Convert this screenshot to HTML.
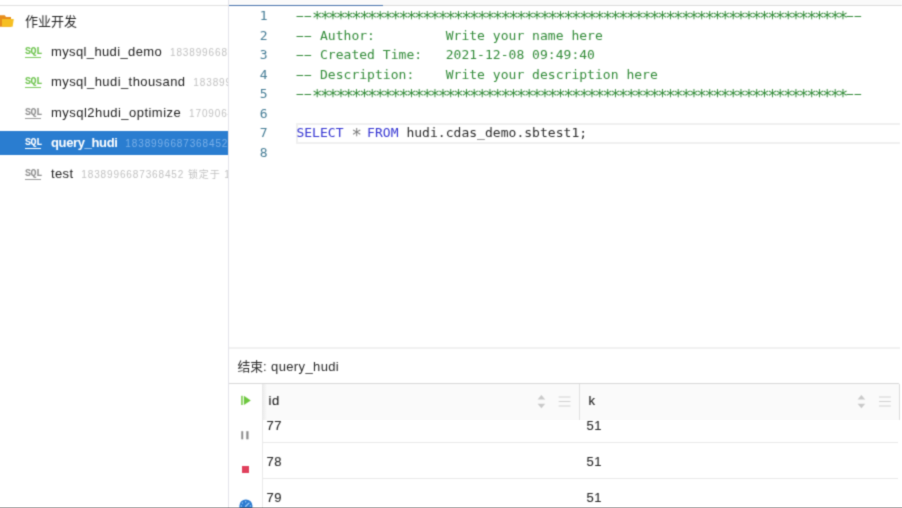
<!DOCTYPE html>
<html lang="zh">
<head>
<meta charset="utf-8">
<title>作业开发</title>
<style>
html,body{margin:0;padding:0;}
body{width:902px;height:508px;overflow:hidden;background:#fff;position:relative;font-family:"Liberation Sans","Noto Sans CJK SC",sans-serif;color:#222;}
.abs{position:absolute;}
#wrap{left:-10px;top:-10px;width:922px;height:528px;filter:url(#soft);}
#wrap>*{margin-left:10px;margin-top:10px;}
#side{left:0;top:0;width:228px;height:508px;}
.item{position:absolute;left:0;width:228px;height:24px;white-space:nowrap;overflow:hidden;}
.item .nm{position:absolute;left:51px;top:0;line-height:24px;font-size:13px;letter-spacing:0.37px;color:#222;}
.item .id em{font-style:normal;}
.item .id{font-size:10px;color:#c2c2c2;margin-left:7.9px;font-weight:normal;letter-spacing:0.87px;position:relative;top:-0.4px;}
.selbg{position:absolute;left:-6px;top:130.5px;width:234px;height:24.5px;background:#2a7dd0;}
.item.sel .nm{color:#fff;font-weight:bold;letter-spacing:-0.36px;}
.item.sel .id{color:#7ab0e8;}
.sql{position:absolute;left:25px;top:5px;width:16px;height:16px;}
.sql span{position:absolute;left:0;top:2px;width:16px;text-align:center;font-family:"Liberation Mono",monospace;font-weight:bold;font-size:10px;line-height:10px;letter-spacing:-0.4px;}
.sql i{position:absolute;left:0;top:12px;width:16px;height:1px;}
.g span{color:#6fc450}.g i{background:#7ccb5e}
.y span{color:#909090}.y i{background:#9a9a9a}
.w span{color:#fff}.w i{background:#fff}
#ed{left:229px;top:0;width:673px;height:348px;}
.ln{position:absolute;left:0;width:38.5px;text-align:right;font-family:"DejaVu Sans Mono","Liberation Mono",monospace;font-size:13px;line-height:19.5px;color:#467d96;}
.cl{position:absolute;left:67.4px;white-space:pre;font-family:"DejaVu Sans Mono","Liberation Mono",monospace;font-size:13px;letter-spacing:0.03px;line-height:19.5px;color:#348c3a;}
.cl b{font-weight:normal;position:relative;top:4.2px;font-size:17.3px;line-height:0;letter-spacing:-2.558px;}
.cl u{text-decoration:none;display:inline-block;transform:scaleX(2);}
.kw{color:#3434d2}.tx{color:#2c2c2c}.op{color:#7a7a7a}
.cell{position:absolute;font-size:13px;line-height:20px;color:#262626;letter-spacing:0.45px;-webkit-text-stroke:0.1px #262626;}
.hd{position:absolute;font-size:13px;line-height:20px;color:#1e1e1e;letter-spacing:0.5px;-webkit-text-stroke:0.15px #1e1e1e;}
.rs{position:absolute;left:263px;width:635px;height:1px;background:#e8e8e8;}
</style>
</head>
<body>
<svg width="0" height="0" style="position:absolute"><defs><filter id="soft" x="0" y="0" width="100%" height="100%" color-interpolation-filters="sRGB"><feConvolveMatrix order="3" kernelMatrix="0.0277 0.111 0.0277 0.111 0.4452 0.111 0.0277 0.111 0.0277" divisor="1" edgeMode="duplicate" preserveAlpha="false"/></filter></defs></svg>
<div id="wrap" class="abs">
<div id="side" class="abs">
  <div class="abs" style="left:-6px;top:5px;width:234px;height:1px;background:#e0e0e0"></div>
  <svg class="abs" style="left:0;top:14px;overflow:visible" width="16" height="14" viewBox="0 0 16 14"><path d="M-4 1.2H4.8L6 3H11V12.7H-4z" fill="#e78d1c"/><path d="M2 5H13.8L12.6 12.7H2z" fill="#f6bf22"/></svg>
  <div class="abs" style="left:25px;top:12px;font-size:13px;line-height:20px;color:#262626">作业开发</div>
  <div class="selbg"></div>
  <div class="item" style="top:40px"><div class="sql g"><span>SQL</span><i></i></div><div class="nm">mysql_hudi_demo<span class="id">1838996687368452</span></div></div>
  <div class="item" style="top:70px"><div class="sql g"><span>SQL</span><i></i></div><div class="nm"><span style="letter-spacing:0.42px">mysql_hudi_thousand</span><span class="id">1838996687368452</span></div></div>
  <div class="item" style="top:101px"><div class="sql y"><span>SQL</span><i></i></div><div class="nm"><span style="letter-spacing:0.46px">mysql2hudi_optimize</span><span class="id">1709064687368452</span></div></div>
  <div class="item sel" style="top:131px"><div class="sql w"><span>SQL</span><i></i></div><div class="nm">query_hudi<span class="id">1838996687368452 <em>锁定于</em></span></div></div>
  <div class="item" style="top:162px"><div class="sql y"><span>SQL</span><i></i></div><div class="nm">test<span class="id">1838996687368452 <em>锁定于</em> 1838996687368452</span></div></div>
</div>
<div class="abs" style="left:228px;top:-6px;width:1px;height:520px;background:#e3e3ea"></div>
<div id="ed" class="abs">
  <div class="abs" style="left:0;top:0;width:673px;height:5px;background:#fafafa"></div>
  <div class="abs" style="left:0;top:5px;width:673px;height:1px;background:#dcdcdc"></div>
  <div class="abs" style="left:0;top:4.8px;width:154px;height:1.7px;background:#4a74ad"></div>
  <div class="abs" style="left:67px;top:123px;width:603.5px;height:21px;border:2px solid #f0f0f0;border-right:0;box-sizing:border-box"></div>
  <div class="ln" style="top:6.15px">1</div><div class="cl" style="top:6.15px"><u>-</u><u>-</u><b>********************************************************************</b><u>-</u><u>-</u></div>
  <div class="ln" style="top:25.65px">2</div><div class="cl" style="top:25.65px"><u>-</u><u>-</u> Author:         Write your name here</div>
  <div class="ln" style="top:45.15px">3</div><div class="cl" style="top:45.15px"><u>-</u><u>-</u> Created Time:   2021-12-08 09:49:40</div>
  <div class="ln" style="top:64.65px">4</div><div class="cl" style="top:64.65px"><u>-</u><u>-</u> Description:    Write your description here</div>
  <div class="ln" style="top:84.15px">5</div><div class="cl" style="top:84.15px"><u>-</u><u>-</u><b>********************************************************************</b><u>-</u><u>-</u></div>
  <div class="ln" style="top:103.65px">6</div>
  <div class="ln" style="top:123.15px">7</div><div class="cl" style="top:123.15px"><span class="kw">SELECT</span><span class="op"> <b>*</b> </span><span class="kw">FROM</span><span class="tx"> hudi.cdas_demo.sbtest1;</span></div>
  <div class="ln" style="top:142.65px">8</div>
</div>
<div class="abs" style="left:229px;top:346.8px;width:670.5px;height:2px;background:#f1f1f1"></div>
<div class="abs" style="left:237.5px;top:357px;font-size:13px;letter-spacing:0.37px;line-height:20px;color:#2a2a2a;white-space:nowrap"><span style="font-size:12.8px;letter-spacing:0">结束</span>: query_hudi</div>
<div class="abs" style="left:229px;top:383px;width:670px;height:1px;background:#d8d8d8"></div>
<div class="abs" style="left:262px;top:384px;width:637.5px;height:35.7px;background:linear-gradient(90deg,#e8e8e8 0,#fafafa 5px);border-right:1.5px solid #dcdcdc;box-sizing:border-box"></div>
<div class="abs" style="left:262px;top:420px;width:1px;height:94px;background:#e9e9e9"></div>
<div class="abs" style="left:579px;top:384px;width:1px;height:35.7px;background:#e0e0e0"></div>
<!-- toolbar icons -->
<svg class="abs" style="left:240px;top:394px" width="12" height="13" viewBox="0 0 12 13"><rect x="1" y="1.8" width="1.9" height="9.2" fill="#8fd468"/><path d="M3.9 1.8L10.8 6.4L3.9 11z" fill="#6dc73f"/></svg>
<svg class="abs" style="left:240px;top:430px" width="12" height="11" viewBox="0 0 12 11"><rect x="1.3" y="1.2" width="1.9" height="8.1" fill="#8a8a8a"/><rect x="6.3" y="1.2" width="2.2" height="8.1" fill="#8a8a8a"/></svg>
<div class="abs" style="left:241.7px;top:466.4px;width:7.1px;height:6.9px;background:#e0405c"></div>
<svg class="abs" style="left:238px;top:498px" width="16" height="10" viewBox="0 0 16 10"><circle cx="7.9" cy="8" r="6.6" fill="#2a7ad0"/><g fill="#9fcdf7"><circle cx="7.6" cy="3.8" r="0.75"/><circle cx="4.4" cy="5.1" r="0.75"/><circle cx="3.4" cy="7.9" r="0.75"/><circle cx="12.4" cy="7.9" r="0.75"/></g><path d="M11 5.1L7.7 8.2" stroke="#a8d2f8" stroke-width="1.3" stroke-linecap="round"/></svg>
<!-- header -->
<div class="hd" style="left:268.5px;top:391px">id</div>
<div class="hd" style="left:588.5px;top:391px">k</div>
<svg class="abs" style="left:536px;top:393px" width="40" height="18" viewBox="0 0 40 18"><path d="M1.6 6.6L5.4 2.1L9.2 6.6zM1.6 10.7L5.4 15.2L9.2 10.7z" fill="#c9c9c9"/><path d="M22.7 4h11.8M22.7 8.5h11.8M22.7 13h11.8" stroke="#d2d2d2" stroke-width="1.1"/></svg>
<svg class="abs" style="left:855.5px;top:393px" width="40" height="18" viewBox="0 0 40 18"><path d="M1.6 6.6L5.4 2.1L9.2 6.6zM1.6 10.7L5.4 15.2L9.2 10.7z" fill="#c9c9c9"/><path d="M23 4h11.8M23 8.5h11.8M23 13h11.8" stroke="#d2d2d2" stroke-width="1.1"/></svg>
<!-- rows -->
<div class="cell" style="left:266.5px;top:416px">77</div>
<div class="cell" style="left:586.5px;top:416px">51</div>
<div class="rs" style="top:442.4px"></div>
<div class="cell" style="left:266.5px;top:452px">78</div>
<div class="cell" style="left:586.5px;top:452px">51</div>
<div class="rs" style="top:477.9px"></div>
<div class="cell" style="left:266.5px;top:488px">79</div>
<div class="cell" style="left:586.5px;top:488px">51</div>
</div>
<div class="abs" style="left:0;top:507px;width:902px;height:1px;background:rgba(0,0,0,0.3)"></div>
</body>
</html>
